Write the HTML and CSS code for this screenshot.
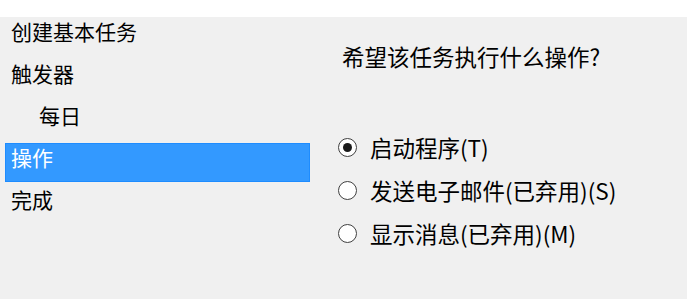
FILE: index.html
```html
<!DOCTYPE html>
<html lang="zh-CN">

<head>
    <meta charset="UTF-8">
    <title>创建基本任务向导</title>
    <link rel="stylesheet" href="styles.css">
</head>

<body>
    <!-- Header strip -->
    <div class="top-strip"></div>

    <div class="wizard">
        <!-- Steps -->
        <ul class="steps">
            <li>创建基本任务</li>
            <li>触发器</li>
            <li class="sub">每日</li>
            <li class="active">操作</li>
            <li>完成</li>
        </ul>

        <!-- Page content -->
        <div class="page">
            <p class="question">希望该任务执行什么操作?</p>
            <div class="options">
                <label class="option"><span class="radio checked"></span>启动程序(T)</label>
                <label class="option"><span class="radio"></span>发送电子邮件(已弃用)(S)</label>
                <label class="option"><span class="radio"></span>显示消息(已弃用)(M)</label>
            </div>
        </div>
    </div>
</body>

</html>
```

FILE: styles.css
```css
/* Global */
body {
    margin: 0;
    font-family: "Noto Sans CJK SC", "Liberation Sans", sans-serif;
    font-size: 21px;
    color: #000;
    background-color: #f0f0f0;
}

.top-strip {
    height: 17px;
    background: #fff;
}

.wizard {
    display: flex;
    height: 282px;
}

/* Steps list */
.steps {
    list-style: none;
    margin: 0;
    padding: 0 0 0 5px;
    width: 305px;
    display: flex;
    flex-direction: column;
    gap: 3px;
}

.steps li {
    height: 39px;
    box-sizing: border-box;
    padding: 0 0 0 5px;
    line-height: 26px;
    border: 1px solid transparent;
}

.steps li.sub {
    padding-left: 33px;
}

.steps li.active {
    background: #3399ff;
    border-color: #1e8cff;
    color: #fff;
}

/* Right page */
.page {
    padding-left: 32px;
    font-size: 22.5px;
}

.question {
    margin: 24px 0 0 0;
    line-height: 30px;
}

.options {
    margin-top: 61px;
    display: flex;
    flex-direction: column;
    gap: 13px;
}

.option {
    display: flex;
    align-items: center;
    height: 30px;
    line-height: 30px;
}

.radio {
    width: 19px;
    height: 19px;
    box-sizing: border-box;
    border: 1px solid #404040;
    border-radius: 50%;
    background: #fff;
    margin: 0 13px 0 -4px;
    position: relative;
    flex-shrink: 0;
}

.radio.checked::after {
    content: '';
    position: absolute;
    top: 4px;
    left: 4px;
    width: 9px;
    height: 9px;
    border-radius: 50%;
    background: #1a1a1a;
}
```
